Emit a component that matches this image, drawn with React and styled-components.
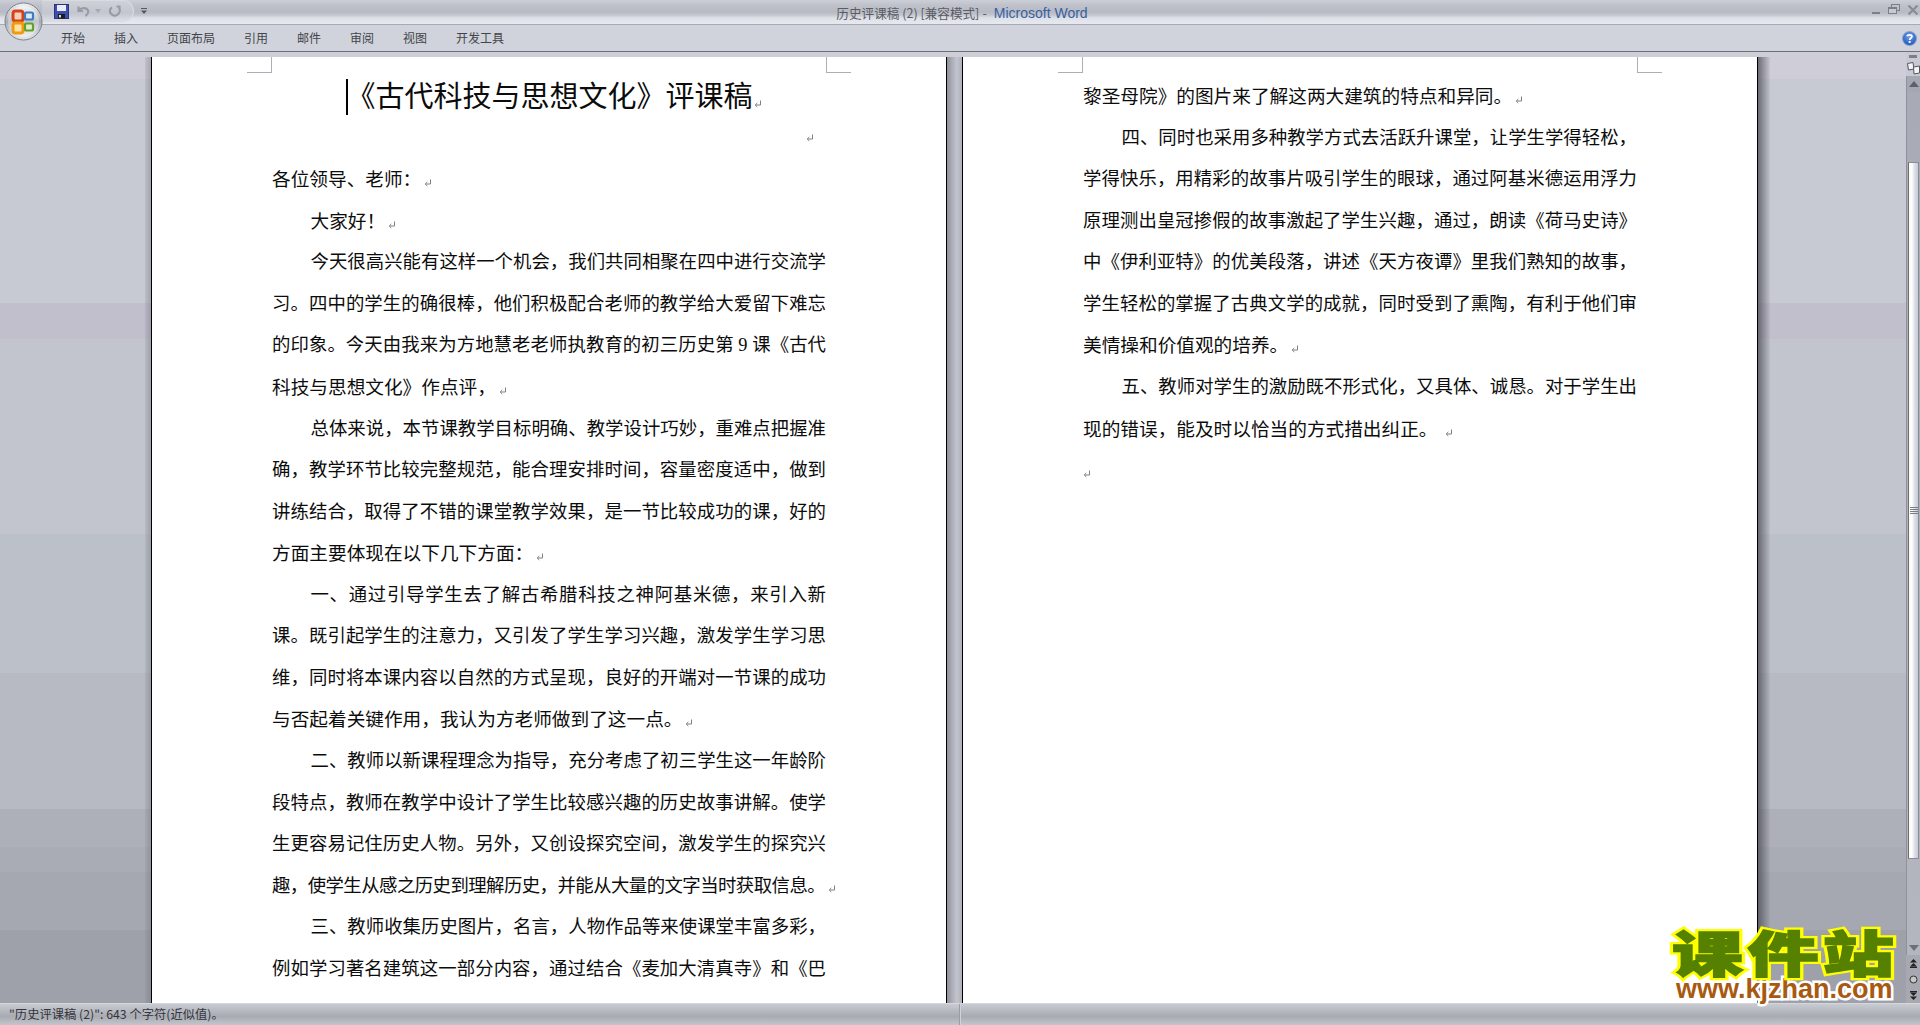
import React from "react";
import styled, { createGlobalStyle } from "styled-components";

const CJK = `"Noto Sans CJK SC", "Noto Sans", sans-serif`;
const BODY = `"Liberation Serif", "Noto Sans CJK SC", serif`;

const Global = createGlobalStyle`
  html, body { margin: 0; padding: 0; height: 100%; overflow: hidden; background: #c7cad3; }
  #root { height: 100%; }
`;

const Window = styled.div`
  position: relative;
  height: 1025px;
  width: 1920px;
  display: flex;
  flex-direction: column;
  overflow: hidden;
  font-family: ${CJK};
`;

const TitleBar = styled.header`
  height: 24px;
  flex: none;
  display: grid;
  grid-template-columns: 1fr auto 1fr;
  align-items: start;
  border-bottom: 1px solid #a8aab3;
  background: linear-gradient(#cdcfd7 0, #bfc2cb 5px, #b7bac4 12px, #c4c7cf 15px, #dfe1e9 18px, #e7e9f1 24px);
`;

const QuickZone = styled.div`
  display: flex;
  align-items: center;
  padding-left: 42px;
`;

const QuickAccess = styled.div`
  width: 92px;
  height: 22px;
  box-sizing: border-box;
  display: flex;
  align-items: center;
  padding-left: 12px;
  border: 1px solid #d9dbe3;
  border-left: none;
  border-radius: 0 12px 12px 0;
  background: linear-gradient(#cfd1d9, #c3c6ce 60%, #dcdee6);
`;

const QuickIcon = styled.svg`
  display: block;
  flex: none;
  margin-right: ${(p) => p.$gap || 0}px;
`;

const Customize = styled.svg`
  display: block;
  margin-left: 7px;
`;

const TitleText = styled.div`
  padding: 4px 0 0 4px;
  display: flex;
  font-size: 12.6px;
  line-height: 18px;
  color: #5a5c62;
  white-space: nowrap;
`;

const TitleDash = styled.span`
  margin: 0 7px 0 3px;
`;

const AppName = styled.span`
  font-family: "Liberation Sans", sans-serif;
  font-size: 14px;
  color: #3a5f9e;
`;

const WindowControls = styled.div`
  justify-self: end;
  display: flex;
  align-items: flex-start;
  gap: 7px;
  padding: 4px 1px 0 0;
`;

const TabBar = styled.nav`
  height: 26px;
  flex: none;
  display: flex;
  align-items: center;
  gap: 29px;
  padding-left: 61px;
  padding-right: 3px;
  border-bottom: 1px solid #6e7076;
  background: #d0d3dc;
`;

const Tab = styled.span`
  font-size: 12px;
  line-height: 26px;
  color: #434449;
  white-space: nowrap;
`;

const HelpButton = styled.svg`
  display: block;
  margin-left: auto;
`;

const OfficeButton = styled.svg`
  position: absolute;
  left: 4px;
  top: 2px;
`;

const DocArea = styled.main`
  flex: 1;
  min-height: 0;
  display: flex;
  background: linear-gradient(
    #cfcdd8 0 27px, #c7cad3 27px 251px, #c1bfcc 251px 287px, #c2c5ce 287px 482px,
    #bcc0c9 482px 621px, #b7bac3 621px 757px, #adb0b9 757px 795px, #a9acb5 795px 820px,
    #a5a8b0 820px 878px, #9ea1a9 878px 951px
  );
`;

const Canvas = styled.div`
  flex: 1;
  min-width: 0;
  display: flex;
  padding: 5px 0 0 145px;
`;

const EdgeLeft = styled.div`
  width: 6px;
  flex: none;
  background: linear-gradient(to right, rgba(130, 133, 145, 0.18), rgba(110, 113, 125, 0.42));
`;

const EdgeRight = styled.div`
  width: 12px;
  flex: none;
  background: linear-gradient(to right, rgba(70, 70, 80, 0.72), rgba(120, 123, 135, 0.1));
`;

const Page = styled.article`
  position: relative;
  box-sizing: border-box;
  width: 796px;
  flex: none;
  padding: 19px 120px 0 120px;
  overflow: hidden;
  background: #fff;
  border-left: 1px solid #000;
  border-right: 1px solid #000;
`;

const Gutter = styled.div`
  width: 15px;
  flex: none;
  background: linear-gradient(to right, #8e909a, #a8aab4 30%, #c2c4ce 65%, #aeb0ba);
`;

const CropMark = styled.i`
  position: absolute;
  top: 0;
  width: 24px;
  height: 15px;
  border-bottom: 1px solid #aeaeb6;
  ${(p) =>
    p.$right
      ? "left: 674px; border-left: 1px solid #aeaeb6;"
      : "left: 95px; border-right: 1px solid #aeaeb6;"}
`;

const Line = styled.p`
  margin: 0;
  padding-left: ${(p) => (p.$indent ? 38.5 : 0)}px;
  height: 41.57px;
  line-height: 41.57px;
  font-family: ${BODY};
  font-size: ${(p) => (p.$full ? 18.4 : 18.67)}px;
  color: #0c0c0c;
  white-space: nowrap;
  text-align: left;
  text-align-last: ${(p) => (p.$full ? "justify" : "left")};
  letter-spacing: ${(p) => p.$squeeze || 0}px;
`;

const Heading = styled.h1`
  margin: 0;
  height: 41.57px;
  line-height: 41.57px;
  font-family: ${BODY};
  font-size: 29px;
  font-weight: 400;
  color: #0c0c0c;
  text-align: center;
  white-space: nowrap;
  transform: translateY(1px);
`;

const Caret = styled.span`
  display: inline-block;
  width: 2px;
  height: 36px;
  margin-right: -2px;
  vertical-align: -8px;
  background: #000;
`;

const EmptyMark = styled.div`
  height: 41.57px;
  display: flex;
  align-items: center;
  justify-content: flex-end;
  padding-right: 22px;
`;

const MarkIcon = styled.svg`
  display: inline-block;
  width: 8px;
  height: 8px;
  margin-left: ${(p) => p.$gap ?? 3}px;
  margin-right: -10px;
  vertical-align: -1px;
`;

const Scrollbar = styled.aside`
  width: 14px;
  flex: none;
  display: flex;
  flex-direction: column;
  background: #b3b6bf;
`;

const Splitter = styled.div`
  height: 8px;
  flex: none;
  display: flex;
  justify-content: center;
  align-items: center;
  background: #c9cbd4;
  &::before {
    content: "";
    width: 8px;
    height: 3px;
    background: #7c7e88;
  }
`;

const ViewButton = styled.div`
  height: 16px;
  flex: none;
  display: flex;
  justify-content: center;
  align-items: center;
  background: #c7cad2;
`;

const ArrowButton = styled.div`
  flex: none;
  height: ${(p) => p.$h}px;
  display: flex;
  justify-content: center;
  align-items: center;
  border-left: 1px solid #8f919b;
  background: ${(p) => p.$bg};
`;

const Track = styled.div`
  flex: 1;
  min-height: 0;
  padding: 70px 1px 0 1px;
  border-left: 1px solid #8f919b;
  background: linear-gradient(#a8abb5, #b3b6bf);
`;

const Thumb = styled.div`
  box-sizing: border-box;
  height: 697px;
  display: flex;
  justify-content: center;
  align-items: center;
  border: 1px solid #8a8c95;
  border-left-color: #6f6f6f;
  background: linear-gradient(to right, #fbf9f2, #ffffff 30%, #e4e8ef 55%, #d8dde6 65%, #c6cbd6);
`;

const Grip = styled.div`
  width: 8px;
  height: 7px;
  background: repeating-linear-gradient(#7b7d85 0 1px, transparent 1px 2px);
`;

const PageNav = styled.div`
  flex: none;
  height: 48px;
  display: flex;
  flex-direction: column;
  background: #a6a9b1;
`;

const NavButton = styled.div`
  flex: 1;
  display: flex;
  justify-content: center;
  align-items: center;
`;

const StatusBar = styled.footer`
  height: 22px;
  flex: none;
  box-sizing: border-box;
  display: grid;
  grid-template-columns: 960px 1fr;
  border-top: 1px solid #d6d7dd;
  background: linear-gradient(#c9cbd3, #b0b2ba 45%, #a9abb3 60%, #c4c6cd);
`;

const StatusText = styled.div`
  padding-left: 9px;
  font-size: 12.3px;
  line-height: 21px;
  color: #33353a;
  white-space: nowrap;
  border-right: 1px solid #9a9ca4;
`;

const StatusRest = styled.div`
  border-left: 1px solid #d0d2d8;
`;

const Stamp = styled.div`
  position: absolute;
  left: 1672px;
  top: 926px;
  width: 228px;
`;

const StampTitle = styled.div`
  position: relative;
  height: 50px;
  width: 157px;
  transform: scaleX(1.45);
  transform-origin: left top;
  font-family: ${CJK};
  font-size: 49px;
  font-weight: 900;
  line-height: 50px;
  letter-spacing: 3px;
  white-space: nowrap;
  color: #558000;
  -webkit-text-stroke: 6px #ffff00;
  paint-order: stroke fill;
  &::after {
    content: attr(data-text);
    position: absolute;
    left: 0;
    top: 0;
    -webkit-text-stroke: 1.5px #558000;
  }
`;

const StampUrl = styled.div`
  font-family: "Liberation Sans", sans-serif;
  font-size: 27px;
  font-weight: 700;
  line-height: 27px;
  padding-left: 4px;
  white-space: nowrap;
  color: #a85a10;
  -webkit-text-stroke: 5px #ffffff;
  paint-order: stroke fill;
`;

const Mark = ({ gap }) => (
  <MarkIcon viewBox="0 0 8 8" $gap={gap} aria-hidden="true">
    <path d="M6.5 0.5V5H1.5M3.3 3L1.2 5L3.3 7" fill="none" stroke="#808080" strokeWidth="1" />
  </MarkIcon>
);

const page1 = [
  ["各位领导、老师：", 0, 0, 1],
  ["大家好！", 1, 0, 1],
  ["今天很高兴能有这样一个机会，我们共同相聚在四中进行交流学", 1, 1],
  ["习。四中的学生的确很棒，他们积极配合老师的教学给大爱留下难忘", 0, 1],
  ["的印象。今天由我来为方地慧老老师执教育的初三历史第 9 课《古代", 0, 1],
  ["科技与思想文化》作点评，", 0, 0, 1],
  ["总体来说，本节课教学目标明确、教学设计巧妙，重难点把握准", 1, 1],
  ["确，教学环节比较完整规范，能合理安排时间，容量密度适中，做到", 0, 1],
  ["讲练结合，取得了不错的课堂教学效果，是一节比较成功的课，好的", 0, 1],
  ["方面主要体现在以下几下方面：", 0, 0, 1],
  ["一、通过引导学生去了解古希腊科技之神阿基米德，来引入新", 1, 1],
  ["课。既引起学生的注意力，又引发了学生学习兴趣，激发学生学习思", 0, 1],
  ["维，同时将本课内容以自然的方式呈现，良好的开端对一节课的成功", 0, 1],
  ["与否起着关键作用，我认为方老师做到了这一点。", 0, 0, 1],
  ["二、教师以新课程理念为指导，充分考虑了初三学生这一年龄阶", 1, 1],
  ["段特点，教师在教学中设计了学生比较感兴趣的历史故事讲解。使学", 0, 1],
  ["生更容易记住历史人物。另外，又创设探究空间，激发学生的探究兴", 0, 1],
  ["趣，使学生从感之历史到理解历史，并能从大量的文字当时获取信息。", 0, 1, 1, -0.55],
  ["三、教师收集历史图片，名言，人物作品等来使课堂丰富多彩，", 1, 1],
  ["例如学习著名建筑这一部分内容，通过结合《麦加大清真寺》和《巴", 0, 1],
];

const page2 = [
  ["黎圣母院》的图片来了解这两大建筑的特点和异同。", 0, 0, 1],
  ["四、同时也采用多种教学方式去活跃升课堂，让学生学得轻松，", 1, 1],
  ["学得快乐，用精彩的故事片吸引学生的眼球，通过阿基米德运用浮力", 0, 1],
  ["原理测出皇冠掺假的故事激起了学生兴趣，通过，朗读《荷马史诗》", 0, 1],
  ["中《伊利亚特》的优美段落，讲述《天方夜谭》里我们熟知的故事，", 0, 1],
  ["学生轻松的掌握了古典文学的成就，同时受到了熏陶，有利于他们审", 0, 1],
  ["美情操和价值观的培养。", 0, 0, 1],
  ["五、教师对学生的激励既不形式化，又具体、诚恳。对于学生出", 1, 1],
  ["现的错误，能及时以恰当的方式措出纠正。 ", 0, 0, 1],
  ["", 0, 0, 1],
];

const Lines = ({ rows }) =>
  rows.map(([text, indent, full, mark, squeeze], i) => (
    <Line key={i} $indent={!!indent} $full={!!full} $squeeze={squeeze}>
      {text}
      {mark ? <Mark gap={text ? 3 : 0} /> : null}
    </Line>
  ));

const tabs = ["开始", "插入", "页面布局", "引用", "邮件", "审阅", "视图", "开发工具"];

export default function App() {
  return (
    <Window>
      <Global />
      <TitleBar>
        <QuickZone>
          <QuickAccess>
            <QuickIcon width="15" height="15" viewBox="0 0 15 15" $gap={8}>
              <rect x="0.5" y="0.5" width="14" height="14" fill="#3b4fae" stroke="#28337a" />
              <rect x="3" y="1" width="9" height="6" fill="#e9ecf6" />
              <rect x="4" y="10" width="7" height="4.5" fill="#1c1c22" />
              <rect x="5" y="11" width="2" height="2.5" fill="#d8d8d8" />
            </QuickIcon>
            <QuickIcon width="13" height="12" viewBox="0 0 13 12" $gap={5}>
              <path d="M1.5 1.5V6H6M2 5.5C4 2.5 9.5 2 11 5.5C11.8 7.5 10.5 9.5 8.5 11" fill="none" stroke="#9a9ca5" strokeWidth="2.2" />
            </QuickIcon>
            <QuickIcon width="6" height="4" viewBox="0 0 6 4" $gap={7}>
              <path d="M0 0H6L3 4Z" fill="#a6a8b0" />
            </QuickIcon>
            <QuickIcon width="13" height="12" viewBox="0 0 13 12">
              <path d="M8.5 1.5H11.5V4.5M11 2.5C12.5 5 11.8 8 9.3 9.8C7 11.3 3.5 10.5 2.3 7.8C1.5 5.8 2.2 3.5 4 2.3" fill="none" stroke="#9a9ca5" strokeWidth="2.2" />
            </QuickIcon>
          </QuickAccess>
          <Customize width="6" height="6" viewBox="0 0 6 6">
            <rect x="0" y="0" width="6" height="1" fill="#55575d" />
            <path d="M0 2.5H6L3 6Z" fill="#55575d" />
          </Customize>
        </QuickZone>
        <TitleText>
          <span>历史评课稿 (2) [兼容模式]</span>
          <TitleDash>-</TitleDash>
          <AppName>Microsoft Word</AppName>
        </TitleText>
        <WindowControls>
          <svg width="10" height="12" viewBox="0 0 10 12"><rect x="1" y="8" width="8" height="2" fill="#7d7f87" /></svg>
          <svg width="12" height="12" viewBox="0 0 12 12"><rect x="3.5" y="0.5" width="8" height="6" fill="none" stroke="#7d7f87" /><rect x="0.5" y="3.5" width="8" height="6" fill="#c8cad2" stroke="#7d7f87" /><rect x="1" y="4" width="7" height="1" fill="#7d7f87" /></svg>
          <svg width="12" height="12" viewBox="0 0 12 12"><path d="M1.5 1.5L10.5 10.5M10.5 1.5L1.5 10.5" stroke="#8a8c94" strokeWidth="2.2" /></svg>
        </WindowControls>
      </TitleBar>
      <TabBar>
        {tabs.map((t) => (
          <Tab key={t}>{t}</Tab>
        ))}
        <HelpButton width="15" height="15" viewBox="0 0 15 15">
          <defs>
            <radialGradient id="helpBlue" cx="50%" cy="35%" r="70%">
              <stop offset="0" stopColor="#6fa3ee" />
              <stop offset="1" stopColor="#1a4fb5" />
            </radialGradient>
          </defs>
          <circle cx="7.5" cy="7.5" r="7" fill="url(#helpBlue)" stroke="#8fa4c8" />
          <path d="M5 5.2C5.4 3.4 9.8 3.2 10 5.4C10.1 7 7.7 7 7.6 9" fill="none" stroke="#fff" strokeWidth="1.7" />
          <rect x="6.7" y="10" width="1.9" height="1.9" fill="#fff" />
        </HelpButton>
      </TabBar>
      <OfficeButton width="39" height="39" viewBox="0 0 39 39">
        <defs>
          <linearGradient id="ring" x1="0" y1="0" x2="0" y2="1">
            <stop offset="0" stopColor="#f2f3f5" />
            <stop offset="0.5" stopColor="#a9acb4" />
            <stop offset="1" stopColor="#e8e9ec" />
          </linearGradient>
          <linearGradient id="orb" x1="0" y1="0" x2="0" y2="1">
            <stop offset="0" stopColor="#f4f5f7" />
            <stop offset="0.5" stopColor="#c3c6cd" />
            <stop offset="1" stopColor="#f0f0ee" />
          </linearGradient>
        </defs>
        <circle cx="19.5" cy="19.5" r="18.5" fill="url(#ring)" stroke="#7f8188" />
        <circle cx="19.5" cy="19.5" r="15.5" fill="url(#orb)" />
        <rect x="9" y="9" width="10" height="10" rx="2.5" fill="#f3d0b8" stroke="#d8401a" strokeWidth="3" />
        <rect x="21" y="10.5" width="8" height="7" rx="1.5" fill="#dbe9f5" stroke="#3b7dbd" strokeWidth="2.2" />
        <rect x="9" y="21" width="10" height="10" rx="2.5" fill="#fde2a8" stroke="#f09a10" strokeWidth="3" />
        <rect x="21" y="21.5" width="8" height="7" rx="1.5" fill="#dfeec8" stroke="#63a12e" strokeWidth="2.2" />
      </OfficeButton>
      <DocArea>
        <Canvas>
          <EdgeLeft />
          <Page>
            <CropMark />
            <CropMark $right />
            <Heading>
              <Caret />《古代科技与思想文化》评课稿
              <Mark gap={1} />
            </Heading>
            <EmptyMark>
              <Mark gap={0} />
            </EmptyMark>
            <Lines rows={page1} />
          </Page>
          <Gutter />
          <Page>
            <CropMark />
            <CropMark $right />
            <Lines rows={page2} />
          </Page>
          <EdgeRight />
        </Canvas>
        <Scrollbar>
          <Splitter />
          <ViewButton>
            <svg width="13" height="13" viewBox="0 0 13 13">
              <path d="M0.5 1.5L6 0.5L7 7L1.5 8Z" fill="#f4f4f6" stroke="#55575d" />
              <path d="M6.5 5L12.5 4L12.5 11L7 12Z" fill="#f4f4f6" stroke="#55575d" />
            </svg>
          </ViewButton>
          <ArrowButton $h={16} $bg="#a5a8b2">
            <svg width="10" height="6" viewBox="0 0 10 6"><path d="M0 6L5 0L10 6Z" fill="#5d6068" /></svg>
          </ArrowButton>
          <Track>
            <Thumb>
              <Grip />
            </Thumb>
          </Track>
          <ArrowButton $h={15} $bg="#b3b6bf">
            <svg width="10" height="6" viewBox="0 0 10 6"><path d="M0 0L5 6L10 0Z" fill="#6d7078" /></svg>
          </ArrowButton>
          <PageNav>
            <NavButton>
              <svg width="9" height="9" viewBox="0 0 9 9"><path d="M4.5 0L8 3.5H1Z M4.5 4L8 7.5H1Z" fill="#222" /><rect x="1" y="7.7" width="7" height="1.3" fill="#222" /></svg>
            </NavButton>
            <NavButton>
              <svg width="9" height="9" viewBox="0 0 9 9"><circle cx="4.5" cy="4.5" r="3.5" fill="#c8c8c8" stroke="#333" /></svg>
            </NavButton>
            <NavButton>
              <svg width="9" height="9" viewBox="0 0 9 9"><rect x="1" y="0" width="7" height="1.3" fill="#222" /><path d="M1 1.5H8L4.5 5Z M1 5.5H8L4.5 9Z" fill="#222" /></svg>
            </NavButton>
          </PageNav>
        </Scrollbar>
      </DocArea>
      <StatusBar>
        <StatusText>"历史评课稿 (2)": 643 个字符(近似值)。</StatusText>
        <StatusRest />
      </StatusBar>
      <Stamp>
        <StampTitle data-text="课件站">课件站</StampTitle>
        <StampUrl>www.kjzhan.com</StampUrl>
      </Stamp>
    </Window>
  );
}
